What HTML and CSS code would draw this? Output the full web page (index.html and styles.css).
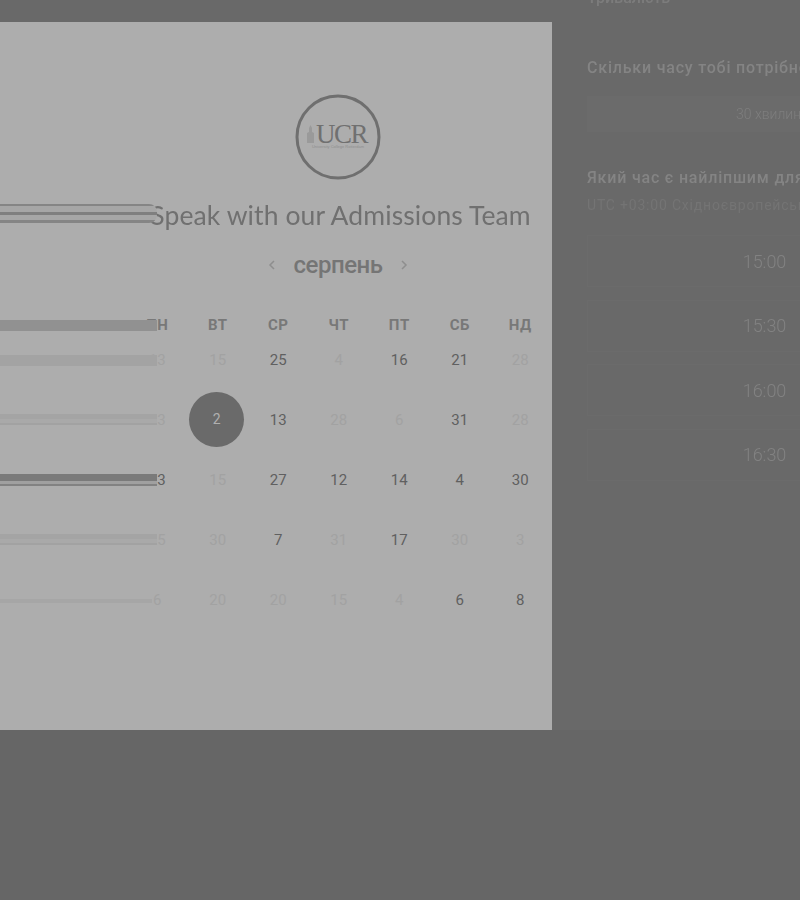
FILE: index.html
```html
<!DOCTYPE html>
<html lang="uk">
<head>
<meta charset="utf-8">
<title>Speak with our Admissions Team</title>
<link rel="stylesheet" href="styles.css">
</head>
<body>
<div class="page">
  <section class="card">
    <div class="main">
      <svg class="logo" width="88" height="88" viewBox="0 0 88 88" aria-label="UCR">
        <circle cx="44" cy="44" r="41" fill="none" stroke="#6f6f6f" stroke-width="3"/>
        <path d="M13 50V40l2-1v-4l1.500-3 1.500 3v4l2 1v10z" fill="#9a9a9a"/>
        <text x="22" y="50" class="logo-word">UCR</text>
        <text x="44" y="55" class="logo-sub" text-anchor="middle">University College Rotterdam</text>
      </svg>
      <div class="title-wrap">
        <span class="title-lines"></span>
        <h1 class="title">Speak with our Admissions Team</h1>
      </div>
      <div class="month">
        <svg width="10" height="12" viewBox="0 0 10 12"><path d="M7 2L3 6l4 4" fill="none" stroke="#8e8e8e" stroke-width="1.500"/></svg>
        <span class="month-name">серпень</span>
        <svg width="10" height="12" viewBox="0 0 10 12"><path d="M3 2l4 4-4 4" fill="none" stroke="#8e8e8e" stroke-width="1.500"/></svg>
      </div>
      <div class="cal-head">
        <span class="bar bar-head"></span>
        <span>ПН</span><span>ВТ</span><span>СР</span><span>ЧТ</span><span>ПТ</span><span>СБ</span><span>НД</span>
      </div>
      <div class="week">
        <span class="bar bar-a"></span>
        <span class="off">13</span><span class="off">15</span><span>25</span><span class="off">4</span><span>16</span><span>21</span><span class="off">28</span>
      </div>
      <div class="week">
        <span class="bar bar-b"></span>
        <span class="off">23</span><span><b class="selected">2</b></span><span>13</span><span class="off">28</span><span class="off">6</span><span>31</span><span class="off">28</span>
      </div>
      <div class="week">
        <span class="bar bar-c"></span>
        <span>23</span><span class="off">15</span><span>27</span><span>12</span><span>14</span><span>4</span><span>30</span>
      </div>
      <div class="week">
        <span class="bar bar-b"></span>
        <span class="off">25</span><span class="off">30</span><span>7</span><span class="off">31</span><span>17</span><span class="off">30</span><span class="off">3</span>
      </div>
      <div class="week">
        <span class="bar bar-e"></span>
        <span class="off">6</span><span class="off">20</span><span class="off">20</span><span class="off">15</span><span class="off">4</span><span>6</span><span>8</span>
      </div>
    </div>
  </section>
  <aside class="panel">
    <p class="clipped">Тривалість</p>
    <h2 class="q q-first">Скільки часу тобі потрібно?</h2>
    <div class="slot slot-short">30 хвилин</div>
    <h2 class="q q-second">Який час є найліпшим для тебе?</h2>
    <p class="zone">UTC +03:00 Східноєвропейський час</p>
    <div class="slots">
      <div class="slot">15:00</div>
      <div class="slot">15:30</div>
      <div class="slot">16:00</div>
      <div class="slot">16:30</div>
    </div>
  </aside>
</div>
</body>
</html>
```
FILE: styles.css
```css
html, body {
  margin: 0;
  height: 100%;
  overflow: hidden;
  background: linear-gradient(#696969 0 730px, #666666 730px);
}

.page {
  display: flex;
  align-items: flex-start;
  width: 800px;
  height: 900px;
  overflow: hidden;
  filter: blur(0.5px);
  font-family: Roboto, "Liberation Sans", sans-serif;
}

.card {
  flex: 0 0 552px;
  height: 708px;
  margin-top: 22px;
  background: #adadad;
  box-sizing: border-box;
  padding: 71px 1px 0 127px;
}

.main {
  display: flex;
  flex-direction: column;
  align-items: stretch;
}

.logo {
  display: block;
  align-self: center;
  transform: translateX(-1px);
}

.logo-word {
  font-family: "Liberation Serif", serif;
  font-size: 27px;
  letter-spacing: -1.500px;
  fill: #707070;
}

.logo-sub {
  font-family: "Liberation Sans", sans-serif;
  font-size: 4px;
  fill: #8f8f8f;
}

.title-wrap {
  position: relative;
  margin-top: 17px;
  height: 34px;
}

.title-lines {
  position: absolute;
  left: -127px;
  top: 6px;
  width: 157px;
  height: 19px;
  border-radius: 0 8px 8px 0;
  background: linear-gradient(#858585 0 2px, #a6a6a6 2px 8px, #7f7f7f 8px 11px, #a6a6a6 11px 16px, #858585 16px 19px);
  z-index: 1;
}

.title {
  margin: 0;
  font-family: Lato, "Open Sans", sans-serif;
  font-weight: 400;
  font-size: 26.500px;
  letter-spacing: 0.100px;
  line-height: 34px;
  color: #707070;
  text-align: center;
  white-space: nowrap;
  transform: translateX(1.500px);
}

.month {
  display: flex;
  align-items: center;
  justify-content: center;
  gap: 17px;
  height: 30px;
  margin: 18px 2px 0 0;
}

.month-name {
  font-size: 24px;
  font-weight: 500;
  color: #757575;
  letter-spacing: -0.500px;
}

.cal-head,
.week {
  position: relative;
  display: grid;
  grid-template-columns: repeat(7, 60.500px);
  justify-items: center;
  align-items: center;
}

.cal-head {
  height: 24px;
  margin-top: 33px;
  margin-bottom: -7px;
  font-size: 15px;
  font-weight: 700;
  letter-spacing: 0.500px;
  color: #787878;
}

.week {
  height: 60px;
  font-size: 15px;
  color: #606060;
}

.off {
  color: #a2a2a2;
}

.selected {
  display: flex;
  align-items: center;
  justify-content: center;
  width: 55px;
  height: 55px;
  border-radius: 50%;
  background: #6a6a6a;
  color: #b0b0b0;
  font-weight: 400;
  font-size: 14px;
  transform: translate(-1px, -1px);
}

.bar {
  position: absolute;
  left: -127px;
  width: 157px;
  z-index: 1;
}

.bar-head {
  top: 7px;
  height: 11px;
  background: #919191;
}

.bar-a {
  top: 25px;
  height: 11px;
  background: #a3a3a3;
}

.bar-b {
  top: 24px;
  height: 11px;
  background: linear-gradient(#a4a4a4 0 5px, #a9a9a9 5px 9px, #a2a2a2 9px 11px);
}

.bar-c {
  top: 24px;
  height: 12px;
  background: linear-gradient(#7a7a7a 0 7px, #a0a0a0 7px 10px, #828282 10px 12px);
}

.bar-e {
  top: 29px;
  height: 4px;
  width: 152px;
  background: #a6a6a6;
}

.panel {
  flex: 0 0 355px;
  margin-left: 35px;
  color: #868686;
}

.clipped {
  margin: -12px 0 0;
  height: 19px;
  line-height: 19px;
  font-size: 16px;
  font-weight: 500;
  color: #7c7c7c;
}

.q {
  margin: 0;
  font-size: 16px;
  font-weight: 500;
  line-height: 20px;
  letter-spacing: 0.800px;
  color: #848484;
  white-space: nowrap;
}

.q-first {
  margin-top: 51px;
}

.q-second {
  margin-top: 36px;
}

.zone {
  margin: 7px 0 0;
  font-size: 14px;
  line-height: 20px;
  letter-spacing: 0.800px;
  color: #747474;
  white-space: nowrap;
}

.slot {
  display: flex;
  align-items: center;
  justify-content: center;
  height: 52px;
  box-sizing: border-box;
  background: #696969;
  border: 1px solid #6b6b6b;
  font-size: 18px;
  font-weight: 300;
  color: #828282;
}

.slot-short {
  height: 36px;
  margin-top: 18px;
  padding-left: 8px;
  background: #6b6b6b;
  border-color: #6b6b6b;
  font-size: 14px;
  color: #7e7e7e;
}

.slots {
  display: flex;
  flex-direction: column;
  gap: 12.500px;
  margin-top: 20px;
}
```
